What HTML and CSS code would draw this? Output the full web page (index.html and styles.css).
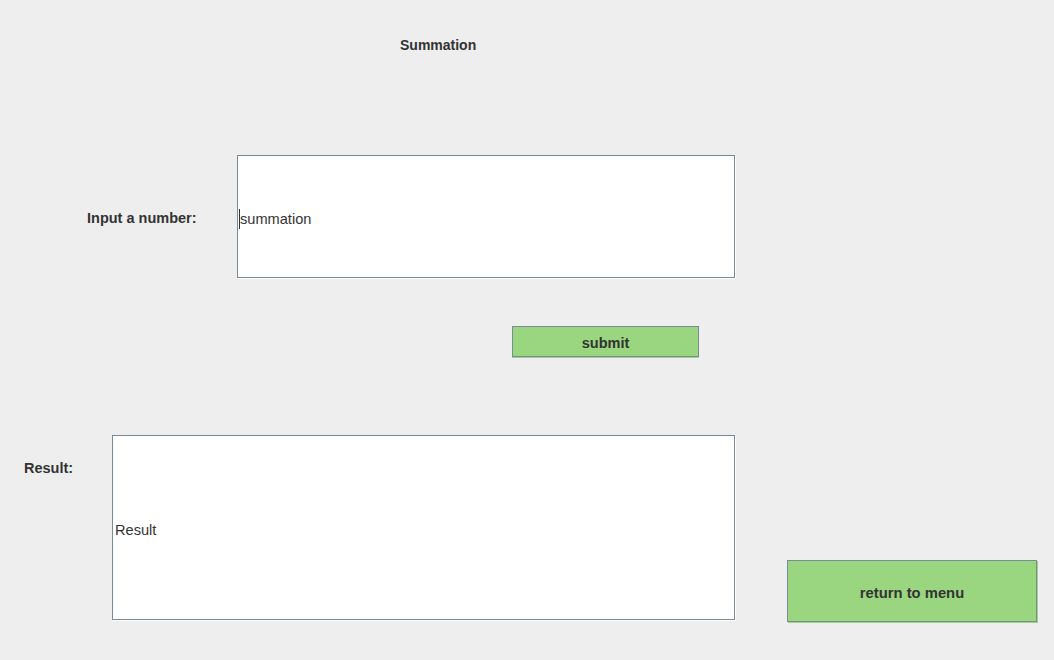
FILE: index.html
```html
<!DOCTYPE html>
<html>
<head>
<meta charset="utf-8">
<link rel="stylesheet" href="styles.css">
</head>
<body>
<div class="frame">
  <div class="title">Summation</div>
  <div class="row-input">
    <div class="label label-input">Input a number:</div>
    <div class="field field-input"><span class="caret"></span><span class="field-text">summation</span></div>
  </div>
  <div class="submit-row">
    <div class="btn btn-submit">submit</div>
  </div>
  <div class="row-result">
    <div class="label label-result">Result:</div>
    <div class="field field-result"><span class="field-text">Result</span></div>
    <div class="btn btn-return">return to menu</div>
  </div>
</div>
</body>
</html>
```
FILE: styles.css
```css
html, body {
  margin: 0;
  padding: 0;
  background: #eeeeee;
}
body {
  width: 1054px;
  height: 660px;
  overflow: hidden;
  font-family: "Liberation Sans", Arial, sans-serif;
  color: #333333;
}
.frame {
  display: flex;
  flex-direction: column;
}
.title {
  padding: 36px 0 0 400px;
  font-weight: bold;
  font-size: 14px;
  line-height: 18px;
}
.row-input {
  margin-top: 101px;
  display: flex;
  align-items: center;
  padding-left: 87px;
}
.label {
  font-weight: bold;
  font-size: 14.5px;
  line-height: 18px;
}
.label-input {
  width: 150px;
  padding-top: 2px;
}
.field {
  box-sizing: border-box;
  background: #ffffff;
  border: 1px solid #7a8a99;
  box-shadow: 1px 1px 0 #ffffff;
  display: flex;
  align-items: center;
  font-size: 14.6px;
  line-height: 18px;
}
.field-input {
  width: 498px;
  height: 123px;
  padding-left: 1px;
  padding-top: 4px;
}
.caret {
  display: inline-block;
  width: 1px;
  height: 20px;
  background: #333333;
}
.field-result {
  width: 623px;
  height: 185px;
  padding-left: 2px;
  padding-top: 5px;
}
.submit-row {
  margin-top: 48px;
  padding-left: 512px;
  display: flex;
}
.btn {
  box-sizing: border-box;
  background: #9ad57f;
  border: 1px solid #7a8a99;
  display: flex;
  align-items: center;
  justify-content: center;
  font-weight: bold;
  font-size: 14.5px;
  line-height: 18px;
}
.btn-submit {
  width: 187px;
  height: 31px;
  box-shadow: 0 1px 0 #9ad57f;
  padding-top: 2px;
}
.row-result {
  margin-top: 78px;
  display: flex;
  align-items: flex-start;
  padding-left: 24px;
}
.label-result {
  width: 88px;
  margin-top: 24px;
}
.btn-return {
  width: 250px;
  height: 62px;
  margin-top: 125px;
  margin-left: 52px;
  box-shadow: 1px 1px 0 #9ad57f;
  padding-top: 3px;
  font-size: 14.8px;
}
```
